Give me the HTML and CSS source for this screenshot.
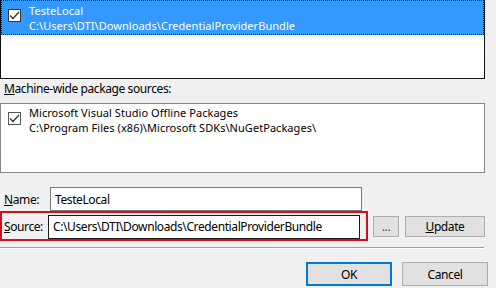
FILE: index.html
```html
<!DOCTYPE html>
<html lang="en">
<head>
    <meta charset="UTF-8">
    <title>Package Sources</title>
    <link rel="stylesheet" href="styles.css">
</head>
<body>

    <div class="list list-user">
        <div class="item selected">
            <span class="check"><svg width="11" height="9" viewBox="0 0 11 9"><path d="M1 4.5 L4 7.5 L10 1" fill="none" stroke="#333" stroke-width="1.3"/></svg></span>
            <div class="item-text">
                <div>TesteLocal</div>
                <div>C:\Users\DTI\Downloads\CredentialProviderBundle</div>
            </div>
        </div>
    </div>

    <div class="caption"><u>M</u>achine-wide package sources:</div>

    <div class="list list-machine">
        <div class="item">
            <span class="check"><svg width="11" height="9" viewBox="0 0 11 9"><path d="M1 4.5 L4 7.5 L10 1" fill="none" stroke="#333" stroke-width="1.3"/></svg></span>
            <div class="item-text">
                <div>Microsoft Visual Studio Offline Packages</div>
                <div>C:\Program Files (x86)\Microsoft SDKs\NuGetPackages\</div>
            </div>
        </div>
    </div>

    <div class="field-row name-row">
        <label class="field-label" for="nameBox"><u>N</u>ame:</label>
        <input type="text" id="nameBox" class="field name-field" value="TesteLocal">
    </div>

    <div class="source-line">
        <div class="field-row source-row">
            <label class="field-label" for="sourceBox"><u>S</u>ource:</label>
            <input type="text" id="sourceBox" class="field source-field" value="C:\Users\DTI\Downloads\CredentialProviderBundle">
        </div>
        <button class="btn btn-dots">...</button>
        <button class="btn btn-update"><u>U</u>pdate</button>
    </div>

    <div class="sep"></div>

    <div class="actions">
        <button class="btn btn-ok">OK</button>
        <button class="btn btn-cancel">Cancel</button>
    </div>

</body>
</html>
```

FILE: styles.css
```css
body {
    margin: 0;
    width: 496px;
    height: 288px;
    overflow: hidden;
    background-color: #f0f0f0;
    font-family: "Noto Sans", "Open Sans", sans-serif;
    font-size: 12px;
    letter-spacing: -0.4px;
    color: #000;
}

.list {
    width: 483px;
    background-color: #fff;
    border: 1px solid #828790;
}

.list-user {
    height: 78px;
    border-color: #111;
    border-top: none;
}

.list-machine {
    margin-top: 7px;
    height: 68px;
}

.item {
    display: flex;
    align-items: flex-start;
    height: 35px;
    padding-left: 7px;
    box-sizing: border-box;
}

.selected {
    background-color: #3399ff;
    color: #fff;
    outline: 1px dotted #102040;
    outline-offset: -1px;
    padding-top: 3px;
}

.list-machine .item {
    padding-top: 1px;
}

.check {
    width: 11px;
    height: 11px;
    margin-top: 6px;
    border: 1px solid #333;
    background: #fff;
    display: flex;
    align-items: center;
    justify-content: center;
    flex-shrink: 0;
}

.list-machine .check {
    border-color: #555;
    margin-top: 7px;
}

.item-text {
    margin-left: 8px;
    font-size: 11px;
    letter-spacing: 0.05px;
    line-height: 15px;
}

.caption {
    margin-top: 3px;
    padding-left: 4px;
    height: 14px;
    line-height: 14px;
}

.field-row {
    display: flex;
    align-items: center;
}

.name-row {
    margin-top: 14px;
    height: 24px;
}

.field-label {
    width: 46px;
    padding-left: 4px;
}

.field {
    font-family: inherit;
    font-size: 12px;
    letter-spacing: -0.4px;
    height: 24px;
    box-sizing: border-box;
    margin: 0;
    padding: 0 4px;
    background: #fff;
    color: #000;
    outline: none;
}

.name-field {
    width: 312px;
    border: 1px solid #7a7a7a;
}

.source-line {
    display: flex;
    align-items: center;
}

.source-row {
    width: 368px;
    height: 30px;
    box-sizing: border-box;
    border: 2px solid #d01020;
    padding-top: 1px;
}

.source-row .field-label {
    width: 44px;
    padding-left: 2px;
}

.source-field {
    width: 312px;
    border: 1px solid #1a1a1a;
}

.btn {
    font-family: inherit;
    font-size: 12px;
    letter-spacing: -0.4px;
    color: #000;
    background-color: #e1e1e1;
    border: 1px solid #adadad;
    padding: 0;
    margin: 0;
    box-sizing: border-box;
}

.btn-dots {
    width: 26px;
    height: 21px;
    margin-left: 5px;
    color: #555;
}

.btn-update {
    width: 80px;
    height: 21px;
    margin-left: 6px;
}

.sep {
    width: 484px;
    height: 1px;
    margin-top: 6px;
    background-color: #a0a0a0;
    border-bottom: 1px solid #fff;
}

.actions {
    display: flex;
    margin-top: 13px;
    padding-left: 306px;
}

.btn-ok {
    width: 86px;
    height: 24px;
    border: 2px solid #0078d7;
}

.btn-cancel {
    width: 86px;
    height: 24px;
    margin-left: 10px;
}
```
